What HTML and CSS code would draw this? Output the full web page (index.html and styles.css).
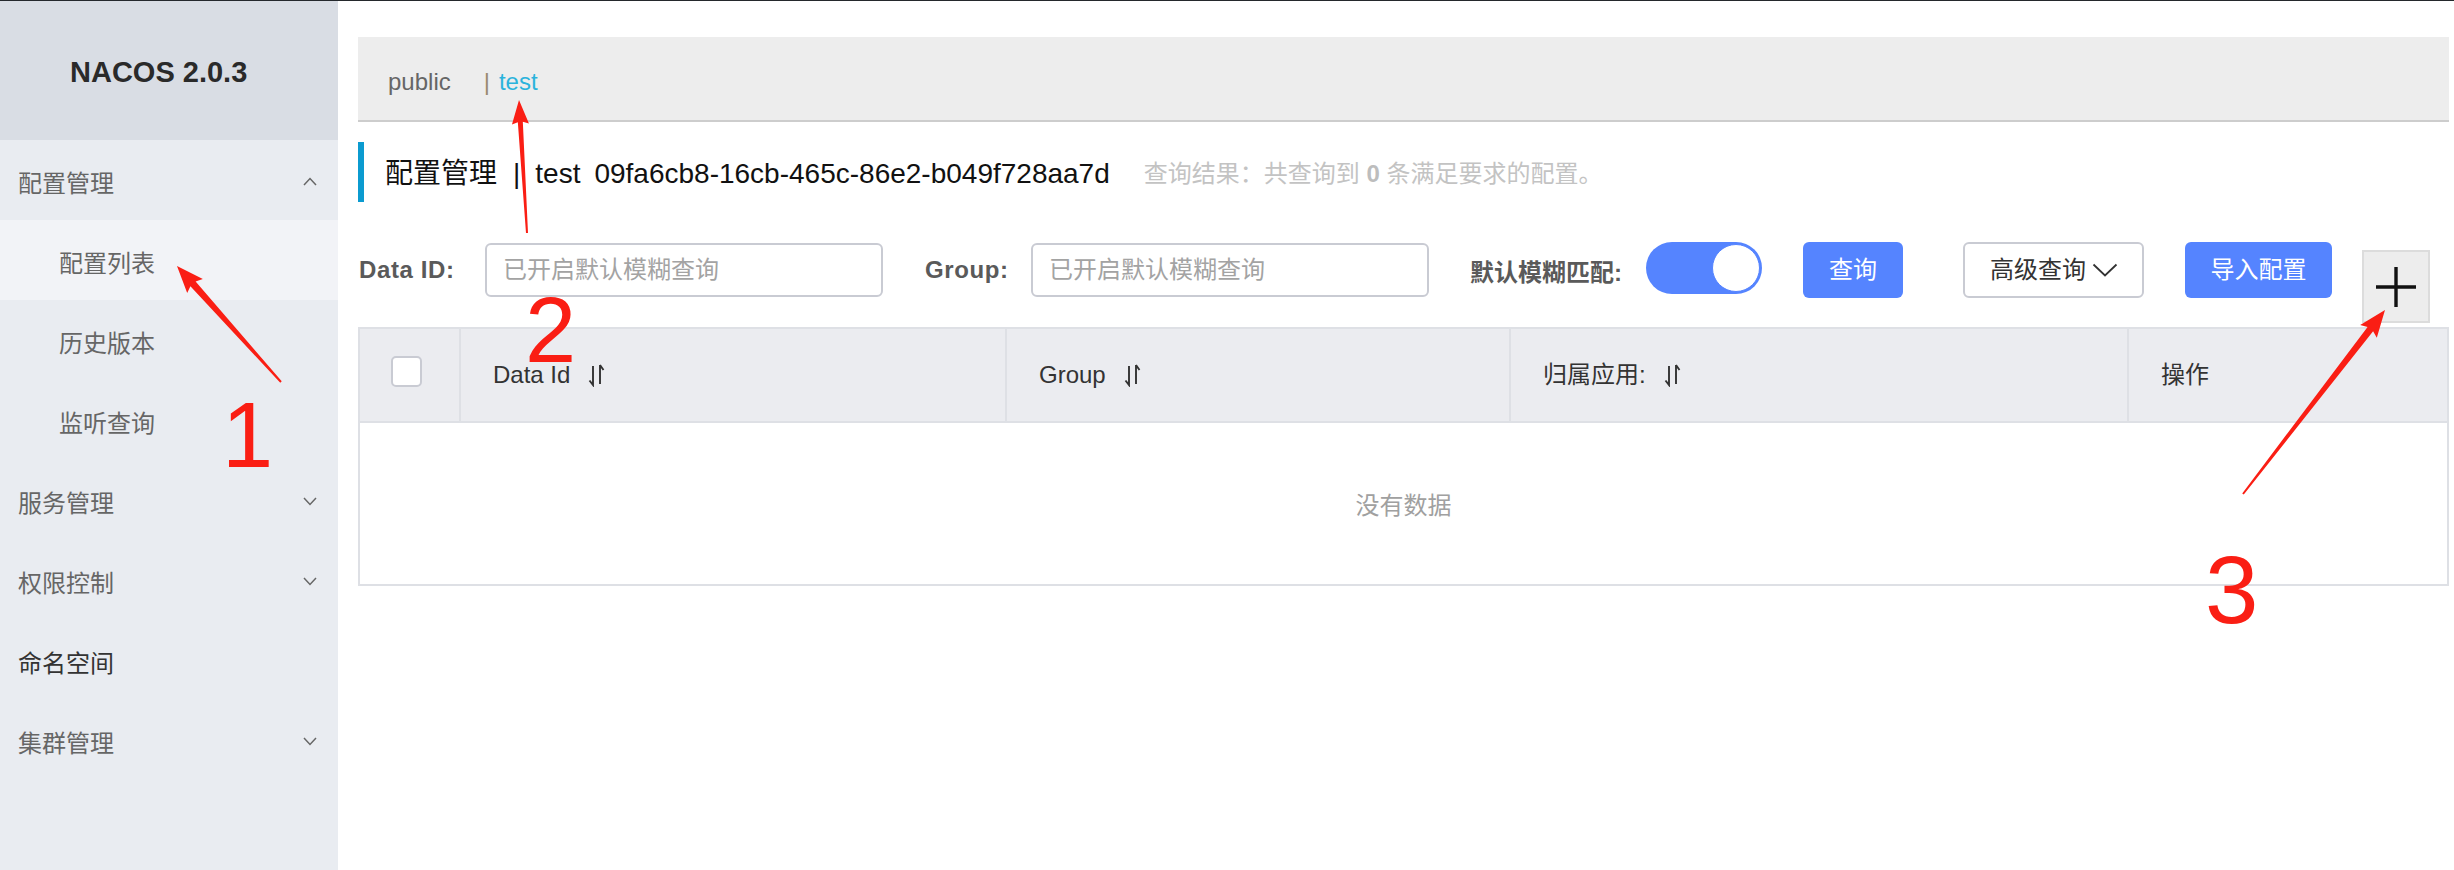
FILE: index.html
```html
<!DOCTYPE html>
<html lang="zh-CN">
<head>
<meta charset="utf-8">
<title>NACOS 2.0.3</title>
<link rel="stylesheet" href="styles.css">
</head>
<body>
<div class="app">
  <aside class="sidebar">
    <div class="brand">NACOS 2.0.3</div>
    <nav class="menu">
      <div class="menu-item"><span>配置管理</span>
        <svg class="chev" width="14" height="9" viewBox="0 0 14 9"><polyline points="1,8 7,1.5 13,8" /></svg>
      </div>
      <div class="menu-item sub active"><span>配置列表</span></div>
      <div class="menu-item sub"><span>历史版本</span></div>
      <div class="menu-item sub"><span>监听查询</span></div>
      <div class="menu-item"><span>服务管理</span>
        <svg class="chev" width="14" height="9" viewBox="0 0 14 9"><polyline points="1,1 7,7.5 13,1" /></svg>
      </div>
      <div class="menu-item"><span>权限控制</span>
        <svg class="chev" width="14" height="9" viewBox="0 0 14 9"><polyline points="1,1 7,7.5 13,1" /></svg>
      </div>
      <div class="menu-item dark"><span>命名空间</span></div>
      <div class="menu-item"><span>集群管理</span>
        <svg class="chev" width="14" height="9" viewBox="0 0 14 9"><polyline points="1,1 7,7.5 13,1" /></svg>
      </div>
    </nav>
  </aside>

  <main class="main">
    <div class="ns-bar">
      <span class="ns">public</span><span class="ns-sep">|</span><span class="ns ns-active">test</span>
    </div>

    <div class="page-title">
      <span class="title-main">配置管理</span><span class="title-sep">|</span><span>test</span><span class="title-id">09fa6cb8-16cb-465c-86e2-b049f728aa7d</span><span class="title-count">查询结果：共查询到 <b>0</b> 条满足要求的配置。</span>
    </div>

    <div class="filters">
      <label class="f-label w-dataid">Data ID:</label>
      <input class="f-input" type="text" placeholder="已开启默认模糊查询">
      <label class="f-label w-group">Group:</label>
      <input class="f-input" type="text" placeholder="已开启默认模糊查询">
      <label class="f-label w-fuzzy">默认模糊匹配:</label>
      <div class="switch"><span class="knob"></span></div>
      <div class="btn btn-primary btn-query">查询</div>
      <div class="btn btn-adv">高级查询
        <svg width="26" height="14" viewBox="0 0 26 14"><polyline points="1.5,1.5 13,12.5 24.5,1.5" /></svg>
      </div>
      <div class="btn btn-primary btn-import">导入配置</div>
      <div class="plus-box">
        <svg width="42" height="42" viewBox="0 0 42 42"><path d="M21 1V41M1 21H41" /></svg>
      </div>
    </div>

    <div class="table">
      <div class="thead">
        <div class="th th-check"><span class="checkbox"></span></div>
        <div class="th">Data Id
          <svg class="sort" width="18" height="24" viewBox="0 0 18 24"><path d="M5 3V22L1.5 17.5M12 2V21M12 2L15.5 7" /></svg>
        </div>
        <div class="th">Group
          <svg class="sort" width="18" height="24" viewBox="0 0 18 24"><path d="M5 3V22L1.5 17.5M12 2V21M12 2L15.5 7" /></svg>
        </div>
        <div class="th">归属应用:
          <svg class="sort" width="18" height="24" viewBox="0 0 18 24"><path d="M5 3V22L1.5 17.5M12 2V21M12 2L15.5 7" /></svg>
        </div>
        <div class="th">操作</div>
      </div>
      <div class="tbody">没有数据</div>
    </div>
  </main>
</div>

<svg class="annotations" width="2454" height="870" viewBox="0 0 2454 870">
  <g class="arrow">
    <polygon transform="translate(281 382) rotate(-131.88)" points="0,-1 131.8,-3.5 128.8,-10.5 155.8,0 128.8,10.5 131.8,3.5 0,1" />
    <polygon transform="translate(527 233) rotate(-93.44)" points="0,-1 111.2,-2.5 109.2,-8.5 133.2,0 109.2,8.5 111.2,2.5 0,1" />
    <polygon transform="translate(2243 494) rotate(-52.34)" points="0,-1 208.4,-3.5 205.4,-10.5 232.4,0 205.4,10.5 208.4,3.5 0,1" />
  </g>
  <text class="num" x="222" y="467" font-size="92">1</text>
  <text class="num" x="525" y="362" font-size="92">2</text>
  <text class="num" x="2205" y="623" font-size="96">3</text>
</svg>
</body>
</html>
```

FILE: styles.css
```css
html, body {
  margin: 0;
  padding: 0;
}

body {
  font-family: "Liberation Sans", "Noto Sans CJK SC", sans-serif;
  background: #ffffff;
  overflow: hidden;
  width: 2454px;
  height: 870px;
}

.app {
  display: flex;
  height: 869px;
  border-top: 1px solid #24282c;
}

/* ---------- sidebar ---------- */
.sidebar {
  width: 338px;
  flex: none;
  background: #e9ecf1;
}

.brand {
  height: 139px;
  box-sizing: border-box;
  padding: 57px 0 0 70px;
  background: #d9dde4;
  font-weight: bold;
  font-size: 29px;
  line-height: 29px;
  color: #2a2a2a;
}

.menu-item {
  height: 80px;
  box-sizing: border-box;
  padding: 8px 21px 0 18px;
  display: flex;
  align-items: center;
  justify-content: space-between;
  font-size: 24px;
  line-height: 24px;
  color: #666666;
}

.menu-item.sub {
  padding-left: 59px;
}

.menu-item.active {
  background: #f2f3f7;
}

.menu-item.dark {
  color: #333333;
}

.chev {
  margin-top: -6px;
}

.chev polyline {
  fill: none;
  stroke: #666666;
  stroke-width: 1.5;
}

/* ---------- main ---------- */
.main {
  flex: 1;
  min-width: 0;
  padding: 36px 5px 0 20px;
}

.ns-bar {
  height: 85px;
  box-sizing: border-box;
  border-bottom: 2px solid #cdcdcd;
  background: #ededed;
  display: flex;
  align-items: center;
  padding: 6px 0 0 30px;
  font-size: 24px;
  line-height: 24px;
}

.ns {
  color: #666666;
}

.ns-sep {
  color: #9a8a70;
  margin: 0 9px 0 33px;
}

.ns-active {
  color: #2bb3dc;
}

.page-title {
  margin-top: 20px;
  height: 60px;
  box-sizing: border-box;
  border-left: 6px solid #0b9bd0;
  padding: 4px 0 0 21px;
  display: flex;
  align-items: center;
  font-size: 28px;
  line-height: 28px;
  color: #111111;
  white-space: nowrap;
}

.title-sep {
  margin: 0 15px 0 16px;
}

.title-id {
  margin-left: 14px;
}

.title-count {
  margin-left: 34px;
  font-size: 24px;
  line-height: 24px;
  color: #c3c3c3;
}

.title-count b {
  color: #bdbdbd;
}

/* ---------- filters ---------- */
.filters {
  margin-top: 40px;
  display: flex;
  align-items: flex-start;
}

.f-label {
  height: 56px;
  box-sizing: border-box;
  display: flex;
  align-items: center;
  font-weight: bold;
  font-size: 24px;
  color: #5a5a5a;
  letter-spacing: 0.6px;
  flex: none;
  white-space: nowrap;
}

.w-dataid {
  width: 127px;
  padding-left: 1px;
}

.w-group {
  width: 106px;
  margin-left: 42px;
}

.w-fuzzy {
  width: 176px;
  margin-left: 41px;
  letter-spacing: 0;
}

.f-input {
  flex: none;
  margin: 1px 0 0 0;
  width: 398px;
  height: 54px;
  box-sizing: border-box;
  border: 2px solid #c9cbd3;
  border-radius: 6px;
  padding: 0 0 0 16px;
  font-family: "Liberation Sans", "Noto Sans CJK SC", sans-serif;
  font-size: 24px;
  color: #333333;
  background: #ffffff;
  outline: none;
}

.f-input::placeholder {
  color: #a3a3a3;
}

.switch {
  flex: none;
  width: 116px;
  height: 52px;
  box-sizing: border-box;
  border-radius: 26px;
  background: #5584ff;
  padding: 2px;
  display: flex;
  justify-content: flex-end;
}

.knob {
  width: 48px;
  height: 48px;
  box-sizing: border-box;
  border-radius: 50%;
  background: #ffffff;
  border: 1px solid #5584ff;
}

.btn {
  flex: none;
  height: 56px;
  box-sizing: border-box;
  border-radius: 6px;
  display: flex;
  align-items: center;
  justify-content: center;
  font-size: 24px;
  line-height: 24px;
  white-space: nowrap;
}

.btn-primary {
  background: #5584ff;
  color: #ffffff;
}

.btn-query {
  width: 100px;
  margin-left: 41px;
}

.btn-adv {
  width: 181px;
  margin-left: 60px;
  border: 2px solid #c9cbd3;
  background: #ffffff;
  color: #333333;
  justify-content: flex-start;
  padding-left: 25px;
  gap: 6px;
}

.btn-adv polyline {
  fill: none;
  stroke: #333333;
  stroke-width: 1.8;
}

.btn-import {
  width: 147px;
  margin-left: 41px;
}

.plus-box {
  flex: none;
  width: 68px;
  height: 73px;
  box-sizing: border-box;
  margin: 8px 0 0 30px;
  background: #ededed;
  border: 2px solid #dcdcdc;
  display: flex;
  align-items: center;
  justify-content: center;
}

.plus-box path {
  stroke: #111111;
  stroke-width: 3.4;
  fill: none;
}

/* ---------- table ---------- */
.table {
  margin-top: 4px;
  border: 2px solid #dee0e5;
}

.thead {
  display: grid;
  grid-template-columns: 101px 546px 504px 618px 1fr;
  height: 94px;
  box-sizing: border-box;
  background: #ebecf0;
  border-bottom: 2px solid #dee0e5;
}

.th {
  box-sizing: border-box;
  border-right: 2px solid #dee0e5;
  display: flex;
  align-items: center;
  padding-left: 32px;
  font-size: 24px;
  line-height: 24px;
  color: #333333;
  white-space: nowrap;
}

.th:last-child {
  border-right: none;
}

.th-check {
  padding-left: 31px;
}

.checkbox {
  width: 31px;
  height: 31px;
  box-sizing: border-box;
  border: 2px solid #c9cbd3;
  border-radius: 5px;
  background: #ffffff;
  margin-bottom: 8px;
}

.sort {
  margin-left: 18px;
}

.sort path {
  fill: none;
  stroke: #333333;
  stroke-width: 1.9;
}

.tbody {
  height: 161px;
  display: flex;
  align-items: center;
  justify-content: center;
  font-size: 24px;
  color: #a0a0a0;
}

/* ---------- annotations (screenshot markup) ---------- */
.annotations {
  position: absolute;
  left: 0;
  top: 0;
  pointer-events: none;
}

.arrow polygon {
  fill: #fa1e14;
}

.num {
  fill: #fa1e14;
  font-family: "Liberation Sans", sans-serif;
}
```
